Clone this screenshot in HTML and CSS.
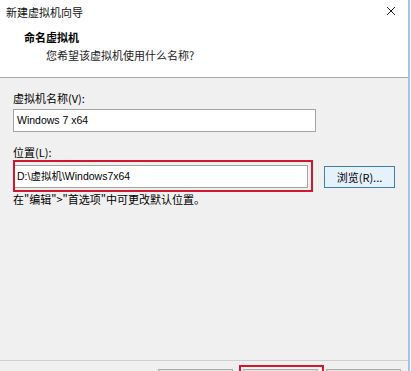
FILE: index.html
```html
<!DOCTYPE html>
<html lang="zh-CN">
<head>
  <meta charset="UTF-8">
  <meta name="viewport" content="width=device-width, initial-scale=1.0">
  <title>新建虚拟机向导</title>
  <link rel="stylesheet" href="styles.css">
</head>
<body>
  <div class="window">
    <div class="titlebar">
      <span class="title">新建虚拟机向导</span>
      <svg class="close" width="10" height="10" viewBox="0 0 10 10">
        <path d="M1 1 L9 9 M9 1 L1 9" stroke="#222" stroke-width="1" fill="none"/>
      </svg>
    </div>

    <div class="header">
      <div class="heading">命名虚拟机</div>
      <div class="subheading">您希望该虚拟机使用什么名称?</div>
    </div>

    <div class="content">
      <div class="field-label">虚拟机名称(V):</div>
      <div class="textbox name-box">Windows 7 x64</div>

      <div class="field-label loc-label">位置(L):</div>
      <div class="loc-row">
        <div class="textbox loc-box">D:\虚拟机\Windows7x64<span class="mark"></span></div>
        <button class="browse">浏览(R)...</button>
      </div>

      <p class="hint">在"编辑"&gt;"首选项"中可更改默认位置。</p>
    </div>

    <!-- only the top edge of the wizard buttons is in the shot -->
    <div class="footer">
      <button class="btn back" aria-label="上一步(B)"></button>
      <button class="btn next" aria-label="下一步(N)"><span class="mark"></span></button>
      <button class="btn cancel" aria-label="取消"></button>
    </div>
  </div>
</body>
</html>
```

FILE: styles.css
```css
body {
  margin: 0;
  padding: 0;
  background-color: #ffffff;
  font-family: "Noto Sans CJK SC", "Noto Sans", sans-serif;
  font-size: 11px;
  color: #000000;
}

.window {
  width: 408px;
  height: 371px;
  display: flex;
  flex-direction: column;
  overflow: hidden;
  border-right: 2px solid #9fc4e8;
}

/* title bar */
.titlebar {
  height: 24px;
  display: flex;
  align-items: center;
  justify-content: space-between;
  padding: 0 12px 0 6px;
  background-color: #ffffff;
  flex-shrink: 0;
}

.title {
  line-height: 16px;
  color: #111;
}

.close {
  display: block;
  margin-top: -2px;
}

/* white header */
.header {
  height: 54px;
  padding: 5px 0 0 24px;
  box-sizing: border-box;
  background-color: #ffffff;
  border-bottom: 1px solid #a9a9a9;
  flex-shrink: 0;
}

.heading {
  font-weight: bold;
  line-height: 16px;
}

.subheading {
  margin: 2px 0 0 22px;
  line-height: 16px;
  color: #222;
}

/* form area */
.content {
  flex: 1;
  background-color: #f0f0f0;
  padding: 12px 0 0 13px;
}

.field-label {
  line-height: 16px;
}

.textbox {
  position: relative;
  height: 23px;
  box-sizing: border-box;
  background-color: #ffffff;
  border: 1px solid #a3a3a3;
  padding: 0 3px;
  font-family: "Liberation Sans", "Noto Sans CJK SC", sans-serif;
  font-size: 10.5px;
  line-height: 21px;
  white-space: nowrap;
}

.name-box {
  width: 303px;
  margin-top: 3px;
}

.loc-label {
  margin-top: 12px;
}

.loc-row {
  display: flex;
  align-items: center;
  gap: 16px;
  margin-top: 5px;
}

.loc-box {
  width: 294px;
  margin-left: 1px;
  padding-left: 2px;
}

.mark {
  position: absolute;
  border: 2px solid #d0182f;
  pointer-events: none;
}

.loc-box .mark {
  top: -6px;
  left: -2px;
  right: -6px;
  bottom: -5px;
}

.browse {
  width: 71px;
  height: 22px;
  padding: 0;
  font-family: inherit;
  font-size: 11px;
  color: #000;
  background-color: #e5f1fb;
  border: 1px solid #3c7fb1;
}

.hint {
  margin: 3px 0 0 0;
  line-height: 16px;
}

/* bottom buttons */
.footer {
  height: 11px;
  box-sizing: border-box;
  flex-shrink: 0;
  display: flex;
  align-items: flex-start;
  background-color: #f0f0f0;
  border-top: 1px solid #cfcfcf;
  padding: 8px 0 0 158px;
}

.btn {
  position: relative;
  width: 75px;
  height: 23px;
  flex-shrink: 0;
  padding: 0;
  background-color: #e1e1e1;
  border: 1px solid #adadad;
}

.next {
  margin-left: 10px;
}

.cancel {
  margin-left: 8px;
}

.next .mark {
  top: -5px;
  left: -5px;
  right: -7px;
  bottom: -5px;
}
```
